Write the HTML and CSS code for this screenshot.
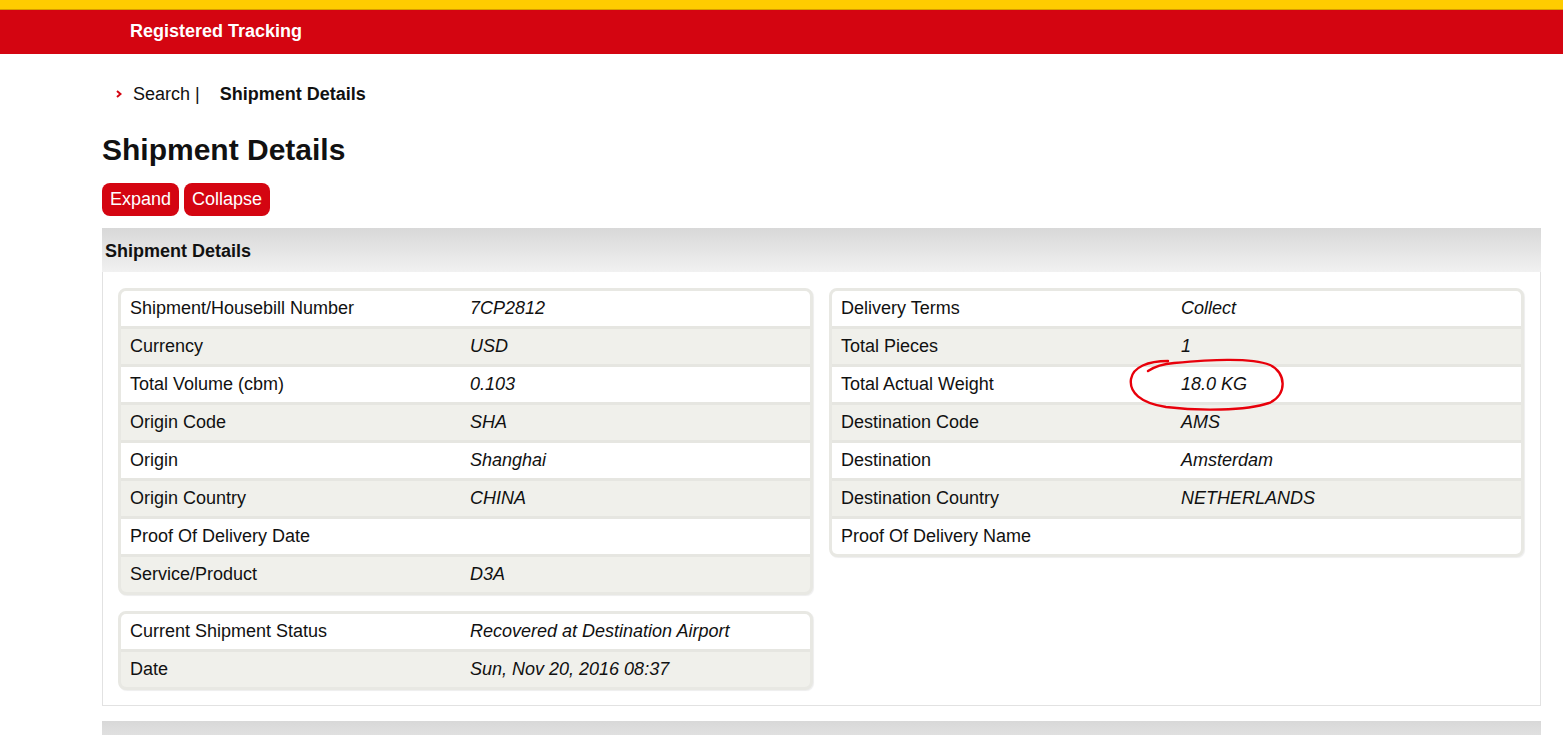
FILE: index.html
```html
<!DOCTYPE html>
<html lang="en">
<head>
  <meta charset="UTF-8">
  <meta name="viewport" content="width=device-width, initial-scale=1.0">
  <title>Registered Tracking - Shipment Details</title>
  <link rel="stylesheet" href="styles.css">
</head>
<body>
  <header class="topbar">
    <div class="topbar-stripe"></div>
    <div class="topbar-main">
      <span class="topbar-title">Registered Tracking</span>
    </div>
  </header>

  <main class="page">
    <nav class="breadcrumb">
      <svg class="crumb-arrow" width="6" height="8" viewBox="0 0 6 8">
        <path d="M1 1 L4.5 4 L1 7" fill="none" stroke="#d40511" stroke-width="2"/>
      </svg>
      <a class="crumb-link" href="#">Search |</a>
      <span class="crumb-current">Shipment Details</span>
    </nav>

    <h1 class="page-title">Shipment Details</h1>

    <div class="toolbar">
      <button class="btn">Expand</button>
      <button class="btn">Collapse</button>
    </div>

    <section class="panel">
      <div class="panel-head">Shipment Details</div>
      <div class="panel-body">
        <div class="column">
          <div class="info-table">
            <div class="row"><span class="label">Shipment/Housebill Number</span><span class="value">7CP2812</span></div>
            <div class="row"><span class="label">Currency</span><span class="value">USD</span></div>
            <div class="row"><span class="label">Total Volume (cbm)</span><span class="value">0.103</span></div>
            <div class="row"><span class="label">Origin Code</span><span class="value">SHA</span></div>
            <div class="row"><span class="label">Origin</span><span class="value">Shanghai</span></div>
            <div class="row"><span class="label">Origin Country</span><span class="value">CHINA</span></div>
            <div class="row"><span class="label">Proof Of Delivery Date</span><span class="value"></span></div>
            <div class="row"><span class="label">Service/Product</span><span class="value">D3A</span></div>
          </div>
          <div class="info-table">
            <div class="row"><span class="label">Current Shipment Status</span><span class="value">Recovered at Destination Airport</span></div>
            <div class="row"><span class="label">Date</span><span class="value">Sun, Nov 20, 2016 08:37</span></div>
          </div>
        </div>

        <div class="column">
          <div class="info-table">
            <div class="row"><span class="label">Delivery Terms</span><span class="value">Collect</span></div>
            <div class="row"><span class="label">Total Pieces</span><span class="value">1</span></div>
            <div class="row">
              <span class="label">Total Actual Weight</span>
              <span class="value marked">18.0 KG
                <!-- hand-drawn circle around the weight -->
                <svg class="scribble" width="160" height="60" viewBox="0 0 160 60">
                  <path d="M22 17 C28 13 36 10 48 9 C82 6 124 3 144 11 C160 18 162 41 143 49 C120 57 72 57 40 53 C14 49 3 38 5 25 C7 13 22 7 42 7"
                        fill="none" stroke="#e8000b" stroke-width="2.4" stroke-linecap="round"/>
                </svg>
              </span>
            </div>
            <div class="row"><span class="label">Destination Code</span><span class="value">AMS</span></div>
            <div class="row"><span class="label">Destination</span><span class="value">Amsterdam</span></div>
            <div class="row"><span class="label">Destination Country</span><span class="value">NETHERLANDS</span></div>
            <div class="row"><span class="label">Proof Of Delivery Name</span><span class="value"></span></div>
          </div>
        </div>
      </div>
    </section>

    <section class="panel">
      <div class="panel-head"></div>
    </section>
  </main>
</body>
</html>
```

FILE: styles.css
```css
body {
  margin: 0;
  background: #fff;
  color: #111;
  font-family: "Liberation Sans", Arial, sans-serif;
  font-size: 18px;
}

/* Yellow / red top bar */
.topbar-stripe {
  height: 9px;
  background: #ffcc00;
  border-bottom: 1px solid #d89a00;
}

.topbar-main {
  height: 44px;
  background: #d40511;
  padding-left: 130px;
  display: flex;
  align-items: center;
}

.topbar-title {
  color: #fff;
  font-weight: bold;
  font-size: 18px;
  margin-top: -2px;
}

.page {
  margin-left: 102px;
  width: 1439px;
}

/* Breadcrumb */
.breadcrumb {
  padding: 30px 0 0 14px;
  display: flex;
  align-items: center;
  height: 20px;
  line-height: 20px;
}

.crumb-arrow {
  margin-right: 11px;
}

.crumb-link {
  color: #111;
  text-decoration: none;
  margin-right: 20px;
}

.crumb-current {
  font-weight: bold;
}

.page-title {
  margin: 29px 0 0;
  font-size: 30px;
  line-height: 34px;
  font-weight: bold;
}

.toolbar {
  margin-top: 16px;
  display: flex;
  gap: 5px;
}

.btn {
  height: 33px;
  padding: 0 8px;
  background: #d40511;
  color: #fff;
  border: none;
  border-radius: 8px;
  font-family: inherit;
  font-size: 18px;
  cursor: pointer;
}

/* Collapsible panel */
.panel {
  margin-top: 12px;
}

.panel + .panel {
  margin-top: 15px;
}

.panel-head {
  height: 44px;
  line-height: 46px;
  padding-left: 3px;
  font-weight: bold;
  background: linear-gradient(#d8d8d8, #f1f1f1);
}

.panel-body {
  border: 1px solid #e2e2e2;
  border-top: none;
  padding: 16px 16px 15px 15px;
  display: grid;
  grid-template-columns: 695px 695px;
  column-gap: 16px;
  align-items: start;
}

.column {
  display: flex;
  flex-direction: column;
  gap: 16px;
}

/* Rounded key/value tables; the gap shows as the row divider */
.info-table {
  display: flex;
  flex-direction: column;
  gap: 3px;
  background: #e6e6e1;
  border: 3px solid #e8e8e3;
  border-radius: 8px;
  overflow: hidden;
  box-shadow: 1px 1px 1px rgba(0, 0, 0, 0.07);
}

.row {
  display: flex;
  height: 35px;
  line-height: 35px;
  background: #fff;
}

.row:nth-child(even) {
  background: #f0f0eb;
}

.label {
  width: 331px;
  padding-left: 9px;
}

.value {
  padding-left: 9px;
  font-style: italic;
}

.marked {
  position: relative;
}

.scribble {
  position: absolute;
  left: -46px;
  top: -13px;
  pointer-events: none;
}
```
